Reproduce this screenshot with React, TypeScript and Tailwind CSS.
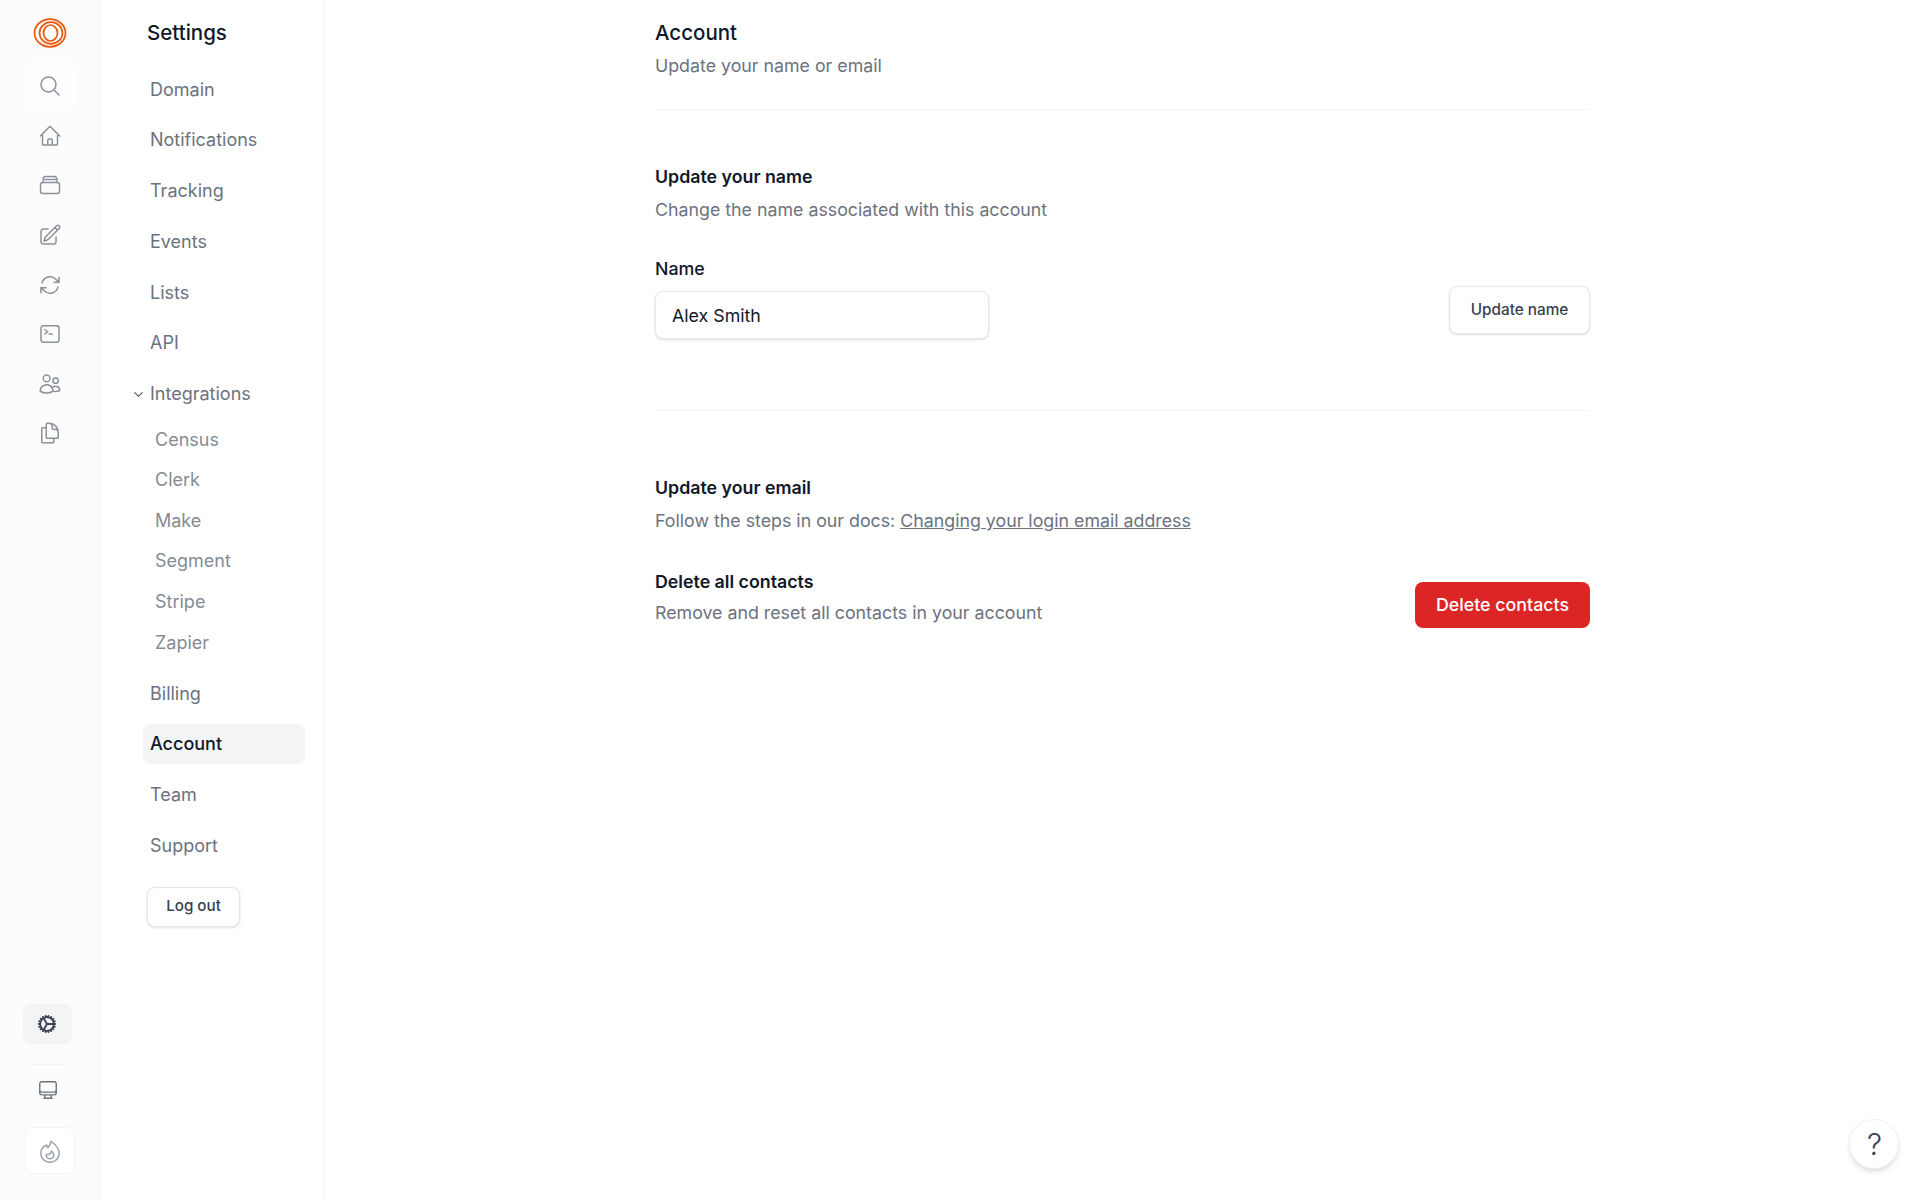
import React from 'react';
import { ChevronDown } from 'lucide-react';
import {
  HiOutlineMagnifyingGlass,
  HiOutlineHome,
  HiOutlinePencilSquare,
  HiOutlineArrowPath,
  HiOutlineCommandLine,
  HiOutlineUsers,
  HiOutlineDocumentDuplicate,
  HiOutlineCog,
  HiOutlineComputerDesktop,
} from 'react-icons/hi2';

const StackIcon = ({ className }: { className?: string }) => (
  <svg viewBox="0 0 24 24" fill="none" stroke="currentColor" strokeWidth="1.4" className={className}>
    <rect x="2.500" y="9.500" width="19" height="11" rx="2.500" />
    <path d="M5 9.500V7c0-2 1.200-3.500 3-3.500h8c1.800 0 3 1.500 3 3.500v2.500" />
    <path d="M5.500 6.500h13" />
  </svg>
);

const FlameIcon = ({ className }: { className?: string }) => (
  <svg viewBox="0 0 24 24" fill="none" stroke="currentColor" strokeWidth="1.4" strokeLinejoin="round" className={className}>
    <path d="M9 6.500C5.500 8 3.500 11 3.500 14a8.500 8.500 0 0 0 17 0C20.500 10 17 6 13 3c-.5 2.500-1.500 4.500-3 6-.5-.5-1-1.500-1-2.500Z" />
    <path d="M8.500 15.500a3.500 3.500 0 0 0 7 .5c0-1.500-.8-3-2-4-.3 1.500-1.500 2.500-2.500 3-.8.3-1.600.3-2.500.5Z" />
  </svg>
);

const railIcons = [
  HiOutlineHome,
  StackIcon,
  HiOutlinePencilSquare,
  HiOutlineArrowPath,
  HiOutlineCommandLine,
  HiOutlineUsers,
  HiOutlineDocumentDuplicate,
];

const topNav = ['Domain', 'Notifications', 'Tracking', 'Events', 'Lists', 'API'];
const integrations = ['Census', 'Clerk', 'Make', 'Segment', 'Stripe', 'Zapier'];
const bottomNav = ['Billing', 'Account', 'Team', 'Support'];

const Rail = () => (
  <aside className="flex h-full w-[101px] shrink-0 flex-col items-center border-r border-[#f3f4f6] bg-[#fcfcfd]">
    <svg viewBox="0 0 34 30" className="mt-[18px] h-[30px] w-[34px] text-[#ea580c]" fill="none" stroke="currentColor" strokeWidth="1.7">
      <ellipse cx="17" cy="15" rx="15.500" ry="13.800" />
      <ellipse cx="18" cy="15" rx="11.500" ry="10.800" />
      <ellipse cx="17.500" cy="15" rx="7" ry="8" />
    </svg>
    <div className="mt-[13px] flex flex-col items-center">
      <div className="flex h-[50px] w-[50px] items-center justify-center rounded-xl bg-[#fefefe]">
        <HiOutlineMagnifyingGlass className="h-6 w-6 text-[#8b9099]" />
      </div>
      {railIcons.map((Icon, i) => (
        <div key={i} className="flex h-[49.6px] w-[50px] items-center justify-center">
          <Icon className="h-6 w-6 text-[#8b9099]" />
        </div>
      ))}
    </div>
    <div className="mt-auto flex flex-col items-center">
      <div className="mr-[6px] flex h-10 w-[49px] items-center justify-center rounded-lg bg-[#f3f4f6]">
        <HiOutlineCog className="h-[22px] w-[22px] stroke-2 text-[#374151]" />
      </div>
      <div className="mr-[6px] mt-5 h-px w-[34px] bg-[#f3f4f6]" />
      <div className="mr-[4px] mt-[15px] flex h-5 items-center justify-center">
        <HiOutlineComputerDesktop className="h-[22px] w-[22px] text-[#6b7280]" />
      </div>
      <div className="mt-[27px] mb-[26px] flex h-[47px] w-[50px] items-center justify-center rounded-lg border border-[#f3f4f6] bg-white">
        <FlameIcon className="h-[26px] w-[26px] text-[#9ca3af]" />
      </div>
    </div>
  </aside>
);

const NavItem = ({ label, active }: { label: string; active?: boolean }) => (
  <div
    className={`flex h-10 items-center rounded-lg px-[7px] text-[18px] ${
      active ? 'bg-[#f3f4f6] font-medium text-[#111827]' : 'font-normal text-[#6b7280]'
    }`}
  >
    {label}
  </div>
);

const SettingsNav = () => (
  <nav className="flex h-full w-[224px] shrink-0 flex-col border-r border-[#f3f4f6] bg-white pl-[42px] pr-[19px]">
    <h2 className="mt-[21px] pl-[4px] text-[20.5px] leading-6 font-medium text-[#111827]">Settings</h2>
    <div className="mt-[24px] flex flex-col gap-[10.8px]">
      {topNav.map((item) => (
        <NavItem key={item} label={item} />
      ))}
      <div className="relative">
        <ChevronDown className="absolute top-[13px] left-[-12px] h-[15px] w-[15px] text-[#4b5563]" strokeWidth={1.75} />
        <NavItem label="Integrations" />
        <div className="mt-[5px] flex flex-col">
          {integrations.map((item) => (
            <div key={item} className="flex h-[40.6px] items-center pl-[12px] text-[18px] text-[#868b95]">
              {item}
            </div>
          ))}
        </div>
      </div>
      {bottomNav.map((item) => (
        <NavItem key={item} label={item} active={item === 'Account'} />
      ))}
    </div>
    <button className="mt-[21px] ml-[4px] h-10 w-[93px] rounded-lg border border-[#e5e7eb] bg-white text-[15.2px] font-medium text-[#374151] shadow-sm">
      Log out
    </button>
  </nav>
);

const Divider = () => <div className="h-px w-full bg-[#f3f4f6]" />;

const Main = () => (
  <main className="min-w-0 flex-1 pl-[330px]">
    <div className="w-[935px]">
      <h1 className="mt-[21px] text-[20.5px] leading-6 font-medium text-[#111827]">Account</h1>
      <p className="mt-[9px] text-[17.8px] leading-6 text-[#6b7280]">Update your name or email</p>
      <div className="mt-[31px]">
        <Divider />
      </div>

      <h3 className="mt-[55px] text-[17.8px] leading-6 font-semibold text-[#111827]">Update your name</h3>
      <p className="mt-[9px] text-[17.8px] leading-6 text-[#6b7280]">Change the name associated with this account</p>
      <div className="mt-[35px] flex items-start justify-between">
        <div>
          <label className="block text-[17.8px] leading-6 font-medium text-[#111827]">Name</label>
          <input
            readOnly
            value="Alex Smith"
            className="mt-[10px] block h-12 w-[334px] rounded-lg border border-[#e5e7eb] bg-white px-4 text-[17.8px] text-[#111827] shadow-sm outline-none"
          />
        </div>
        <button className="mt-[29px] h-12 w-[141px] rounded-lg border border-[#e5e7eb] bg-white text-[15.3px] font-medium text-[#374151] shadow-sm">
          Update name
        </button>
      </div>
      <div className="mt-[71px]">
        <Divider />
      </div>

      <h3 className="mt-[65px] text-[17.8px] leading-6 font-semibold text-[#111827]">Update your email</h3>
      <p className="mt-[9px] text-[17.8px] leading-6 text-[#6b7280]">
        Follow the steps in our docs: <span className="underline">Changing your login email address</span>
      </p>
      <div className="mt-[37px] flex items-start justify-between">
        <div>
          <h3 className="text-[17.8px] leading-6 font-semibold text-[#111827]">Delete all contacts</h3>
          <p className="mt-[7px] text-[17.8px] leading-6 text-[#6b7280]">Remove and reset all contacts in your account</p>
        </div>
        <button className="mt-[12px] h-[46px] w-[175px] rounded-lg bg-[#dc2626] text-[17.8px] font-medium text-white">
          Delete contacts
        </button>
      </div>
    </div>
  </main>
);

export default function App() {
  return (
    <div className="relative flex h-[1200px] w-[1920px] overflow-hidden bg-white font-['Inter',sans-serif]">
      <Rail />
      <SettingsNav />
      <Main />
      <button className="absolute top-[1119px] left-[1849px] flex h-[50px] w-[50px] items-center justify-center rounded-full border border-[#f0f1f3] bg-white pl-px text-[30px] font-light text-[#374151] shadow-md">
        ?
      </button>
    </div>
  );
}
